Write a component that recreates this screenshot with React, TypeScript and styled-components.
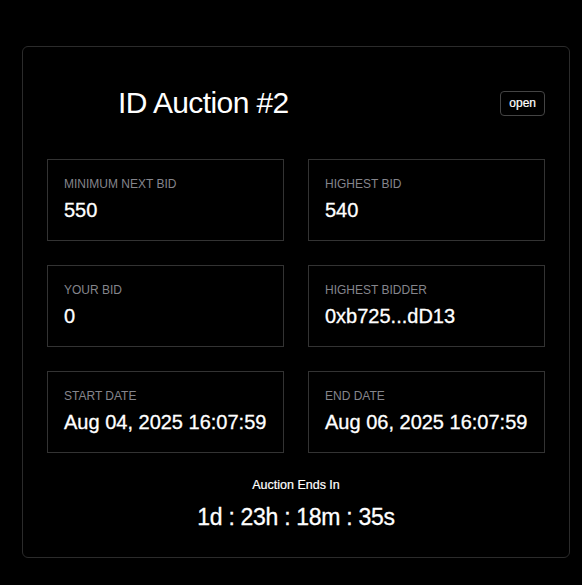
import styled, { createGlobalStyle } from "styled-components";

const GlobalStyle = createGlobalStyle`
  html, body {
    margin: 0;
    padding: 0;
    background: #000;
  }
  body {
    font-family: "Liberation Sans", Arial, sans-serif;
    color: #fff;
  }
`

const stats = [
    {label: "Minimum Next Bid", value: "550"},
    {label: "Highest Bid", value: "540"},
    {label: "Your Bid", value: "0"},
    {label: "Highest Bidder", value: "0xb725...dD13"},
    {label: "Start Date", value: "Aug 04, 2025 16:07:59"},
    {label: "End Date", value: "Aug 06, 2025 16:07:59"},
]

export default function App() {
    return (
        <>
            <GlobalStyle/>
            <Page>
                <Card>
                    <Header>
                        <TitleWrap>
                            <LogoSlot/>
                            <Title>ID Auction #2</Title>
                        </TitleWrap>
                        <Badge>open</Badge>
                    </Header>
                    <StatGrid>
                        {stats.map((s) => (
                            <StatBox key={s.label}>
                                <StatLabel>{s.label}</StatLabel>
                                <StatValue>{s.value}</StatValue>
                            </StatBox>
                        ))}
                    </StatGrid>
                    <Countdown>
                        <CountdownLabel>Auction Ends In</CountdownLabel>
                        <CountdownTime>1d : 23h : 18m : 35s</CountdownTime>
                    </Countdown>
                </Card>
            </Page>
        </>
    )
}

const Page = styled.main`
  min-height: 585px;
  padding: 46px 12px 0 22px;
  box-sizing: border-box;
`

const Card = styled.section`
  width: 548px;
  box-sizing: border-box;
  border: 1px solid #2b2b2b;
  border-radius: 6px;
  padding: 24px 24px 25px;
  background: #000;
`

const Header = styled.div`
  height: 64px;
  display: flex;
  align-items: center;
  justify-content: space-between;
  margin-bottom: 24px;
`

const TitleWrap = styled.div`
  display: flex;
  align-items: center;
  gap: 7px;
`

const LogoSlot = styled.div`
  width: 64px;
  height: 64px;
`

const Title = styled.h1`
  margin: 0;
  font-size: 30px;
  font-weight: 400;
  letter-spacing: -0.6px;
`

const Badge = styled.span`
  font-size: 12px;
  line-height: 15px;
  padding: 4px 8px;
  border: 1px solid #444;
  border-radius: 4px;
  -webkit-text-stroke: 0.2px #fff;
`

const StatGrid = styled.div`
  display: grid;
  grid-template-columns: 1fr 1fr;
  gap: 24px;
`

const StatBox = styled.div`
  border: 1px solid #333;
  padding: 16px;
  display: flex;
  flex-direction: column;
  gap: 4px;
`

const StatLabel = styled.span`
  font-size: 12px;
  line-height: 16px;
  color: #85858c;
  text-transform: uppercase;
`

const StatValue = styled.span`
  font-size: 20px;
  line-height: 28px;
  white-space: nowrap;
  -webkit-text-stroke: 0.3px #fff;
`

const Countdown = styled.div`
  margin-top: 24px;
  display: flex;
  flex-direction: column;
  align-items: center;
  gap: 9px;
`

const CountdownLabel = styled.span`
  font-size: 12.5px;
  line-height: 16px;
  -webkit-text-stroke: 0.2px #fff;
`

const CountdownTime = styled.span`
  font-size: 23px;
  line-height: 30px;
  letter-spacing: -0.3px;
  -webkit-text-stroke: 0.3px #fff;
`
